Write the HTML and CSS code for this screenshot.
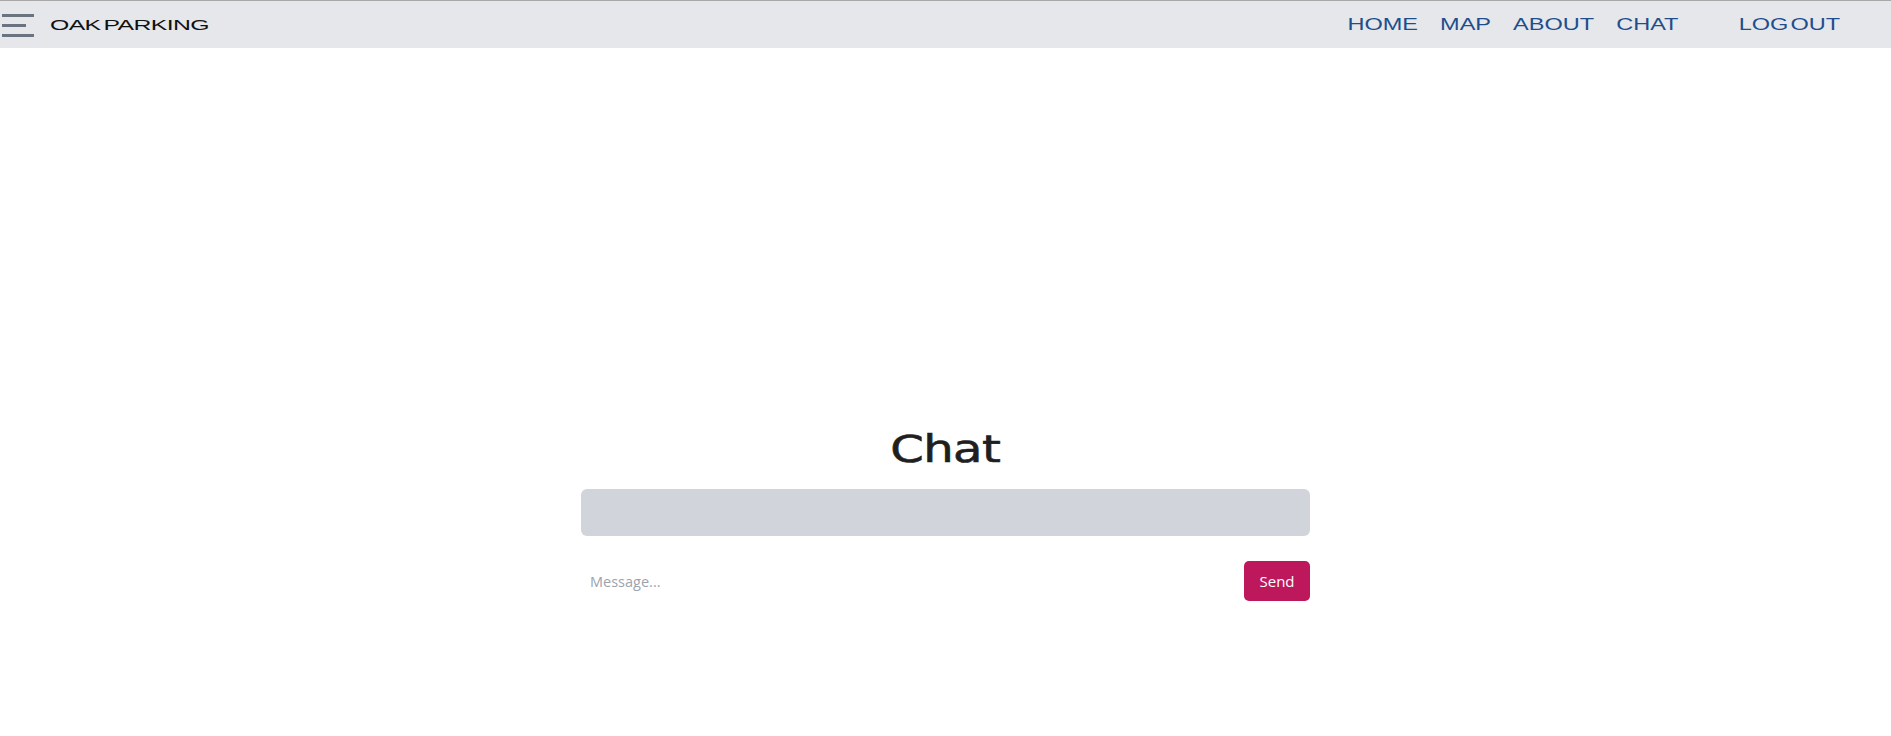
FILE: index.html
```html
<!DOCTYPE html>
<html lang="en">
<head>
<meta charset="utf-8">
<title>Oak Parking - Chat</title>
<link rel="stylesheet" href="styles.css">
</head>
<body>
<header class="topbar">
  <button class="menu-btn" aria-label="Menu">
    <svg width="34" height="26" viewBox="0 0 34 26">
      <rect x="0" y="2" width="32" height="3" fill="#6b7280"/>
      <rect x="0" y="12" width="24" height="3" fill="#6b7280"/>
      <rect x="0" y="22" width="32" height="3" fill="#6b7280"/>
    </svg>
  </button>
  <div class="brand"><span class="brand-text">OAK PARKING</span></div>
  <nav class="nav">
    <a href="#">HOME</a>
    <a href="#">MAP</a>
    <a href="#">ABOUT</a>
    <a href="#">CHAT</a>
    <a href="#" class="logout">LOG OUT</a>
  </nav>
</header>
<main class="main">
  <section class="chat">
    <h1 class="chat-title"><span>Chat</span></h1>
    <div class="messages"></div>
    <form class="composer">
      <input class="composer-input" type="text" placeholder="Message...">
      <button class="send-btn" type="button">Send</button>
    </form>
  </section>
</main>
</body>
</html>
```

FILE: styles.css
```css
* { box-sizing: border-box; }
html, body { margin: 0; padding: 0; background: #fff; }
body { font-family: "Liberation Sans", Arial, sans-serif; }

.topbar {
  display: flex;
  align-items: center;
  height: 48px;
  background: #e5e7eb;
  border-top: 1px solid #a8a8a8;
  padding-left: 2px;
  padding-right: 51px;
}
.menu-btn {
  border: 0;
  background: none;
  padding: 0;
  margin: 0;
  width: 34px;
  height: 26px;
  display: flex;
}
.brand {
  margin-left: 14px;
  font-size: 15.5px;
  color: #111;
}
.brand-text {
  display: inline-block;
  transform: scaleX(1.6);
  transform-origin: left center;
  letter-spacing: -0.4px;
  word-spacing: -2px;
}
.nav {
  margin-left: auto;
  display: flex;
  align-items: center;
  gap: 15px;
  transform: scaleX(1.47);
  transform-origin: right center;
}
.nav a {
  color: #1e4e8c;
  text-decoration: none;
  font-size: 16px;
}
.nav .logout { margin-left: 26px; word-spacing: -3px; }

.main {
  padding-top: 383px;
}
.chat {
  width: 729px;
  margin: 0 auto;
}
.chat-title {
  margin: 0;
  text-align: center;
  font-family: "DejaVu Sans", sans-serif;
  font-weight: normal;
  font-size: 37px;
  line-height: 37px;
  color: #1f1f1f;
  -webkit-text-stroke: 0.6px #1f1f1f;
}
.chat-title span {
  display: inline-block;
  transform: scaleX(1.3);
  letter-spacing: -0.5px;
}
.messages {
  margin-top: 21px;
  height: 47px;
  background: #d1d5db;
  border-radius: 6px;
}
.composer {
  margin: 25px 0 0;
  display: flex;
  align-items: center;
  gap: 12px;
}
.composer-input {
  flex: 1;
  height: 40px;
  border: 0;
  outline: none;
  padding: 0 9px;
  font-family: "Open Sans", sans-serif;
  font-size: 14.5px;
  color: #111;
  background: transparent;
}
.composer-input::placeholder { color: #9ca3af; }
.send-btn {
  width: 66px;
  height: 40px;
  border: 0;
  border-radius: 5px;
  background: #be185d;
  color: #fff;
  font-family: "Open Sans", sans-serif;
  font-size: 15px;
  padding: 0;
}
```
